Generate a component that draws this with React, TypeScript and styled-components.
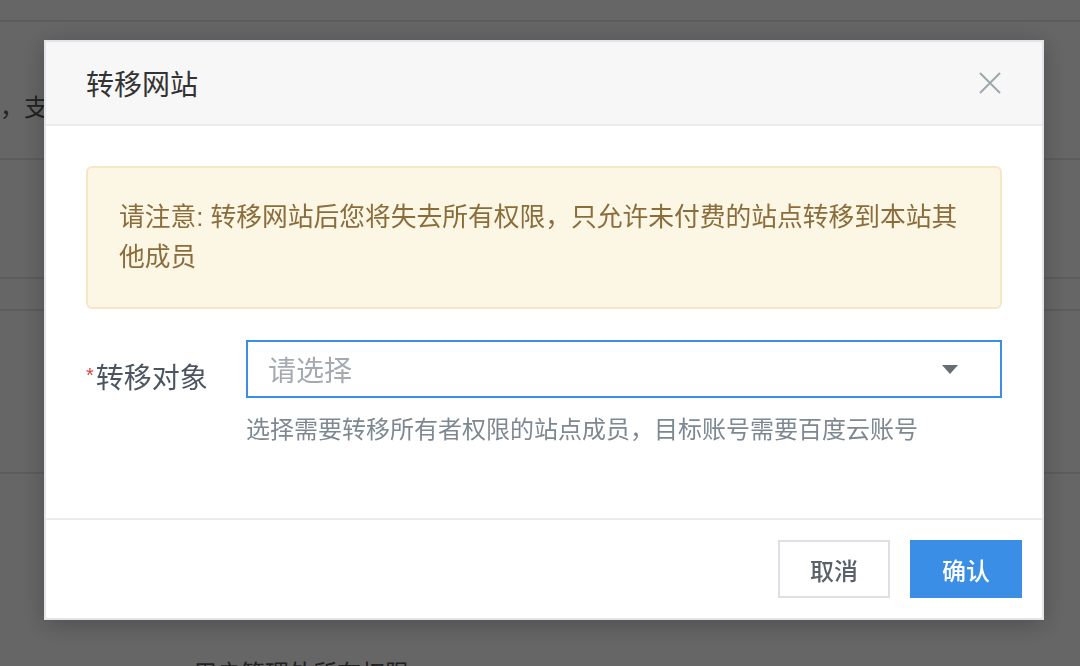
import React from 'react'
import styled, { createGlobalStyle } from 'styled-components'

const GlobalStyle = createGlobalStyle`
  html, body {
    margin: 0;
    padding: 0;
    background: #ffffff;
    font-family: "Liberation Sans", "Noto Sans CJK SC", sans-serif;
    overflow: hidden;
  }
  * {
    box-sizing: border-box;
  }
`

const Page = styled.div`
  width: 1080px;
  height: 666px;
  overflow: hidden;
  background: #ffffff;
  color: #444;
`

const Section = styled.div<{ $height: number; $padTop?: number }>`
  height: ${p => p.$height}px;
  padding-top: ${p => p.$padTop || 0}px;
  border-bottom: 2px solid #e6e6e6;
`

const PageText = styled.div<{ $indent?: number }>`
  padding-left: ${p => p.$indent || 0}px;
  font-size: 24px;
  line-height: 36px;
  color: #555;
  white-space: nowrap;
`

const BottomBlock = styled.div`
  padding-top: 182px;
`

const Mask = styled.div`
  position: fixed;
  inset: 0;
  background: rgba(0, 0, 0, 0.6);
  display: flex;
  align-items: flex-start;
  padding: 40px 0 0 44px;
`

const Dialog = styled.div`
  width: 1000px;
  height: 580px;
  background: #fff;
  border: 2px solid #e1e4e8;
  box-shadow: 0 4px 24px rgba(0, 0, 0, 0.25);
  display: flex;
  flex-direction: column;
`

const Header = styled.div`
  height: 84px;
  flex: none;
  background: #f7f7f7;
  border-bottom: 2px solid #ebebeb;
  display: flex;
  align-items: center;
  justify-content: space-between;
  padding: 0 41px 0 40px;
`

const Title = styled.div`
  font-size: 28px;
  color: #333;
`

const CloseButton = styled.button`
  width: 22px;
  height: 22px;
  padding: 0;
  border: 0;
  background: none;
  display: flex;
  cursor: pointer;
`

const Body = styled.div`
  flex: 1;
  padding: 40px 40px 40px 40px;
`

const Notice = styled.div`
  background: #fcf6e5;
  border: 2px solid #f6e7c6;
  border-radius: 6px;
  padding: 29px 30px 30px 31px;
  font-size: 25.75px;
  line-height: 40px;
  color: #8a6d3b;
`

const FormItem = styled.div`
  display: flex;
  margin-top: 31px;
  margin-bottom: 30px;
`

const Label = styled.div`
  width: 160px;
  flex: none;
  padding: 6px 41px 0 0;
  text-align: right;
  font-size: 28px;
  line-height: 58px;
  color: #4b5560;
  white-space: nowrap;
`

const Required = styled.span`
  color: #e2403f;
  font-size: 20px;
  vertical-align: 6px;
  margin-right: 2px;
`

const Control = styled.div`
  flex: 1;
`

const Select = styled.div<{ $focused?: boolean }>`
  height: 58px;
  border: 2px solid ${p => (p.$focused ? '#3b8ee3' : '#dde1e6')};
  display: flex;
  align-items: center;
  justify-content: space-between;
  padding: 0 42px 0 20px;
  background: #fff;
`

const Placeholder = styled.span`
  font-size: 28px;
  color: #a3aab1;
`

const Help = styled.div`
  margin-top: 14px;
  font-size: 24px;
  line-height: 36px;
  color: #7d8891;
`

const Footer = styled.div`
  flex: none;
  border-top: 2px solid #ebebeb;
  padding: 20px 20px 20px 20px;
  display: flex;
  justify-content: flex-end;
  gap: 20px;
`

const Button = styled.button<{ $primary?: boolean }>`
  width: 112px;
  height: 58px;
  font-family: inherit;
  font-size: 24px;
  font-weight: 500;
  border: 2px solid ${p => (p.$primary ? '#3a8ee6' : '#dde1e6')};
  background: ${p => (p.$primary ? '#3a8ee6' : '#fff')};
  color: ${p => (p.$primary ? '#fff' : '#5a6169')};
  cursor: pointer;
`

const CloseIcon = () => (
  <svg width="22" height="22" viewBox="0 0 22 22">
    <path d="M1 1 L21 21 M21 1 L1 21" stroke="#9ea8ae" strokeWidth="2" fill="none" />
  </svg>
)

const Caret = () => (
  <svg width="16" height="9" viewBox="0 0 16 9">
    <path d="M0 0 L16 0 L8 9 Z" fill="#666d75" />
  </svg>
)

const App: React.FC = () => {
  return (
    <>
      <GlobalStyle />
      <Page>
        <Section $height={22} />
        <Section $height={138} $padTop={68}>
          <PageText>，支持将网站转移给其他成员</PageText>
        </Section>
        <Section $height={119} />
        <Section $height={32} />
        <Section $height={163} />
        <BottomBlock>
          <PageText $indent={193}>用户管理外所有权限</PageText>
        </BottomBlock>
      </Page>
      <Mask>
        <Dialog>
          <Header>
            <Title>转移网站</Title>
            <CloseButton aria-label="关闭">
              <CloseIcon />
            </CloseButton>
          </Header>
          <Body>
            <Notice>
              请注意: 转移网站后您将失去所有权限，只允许未付费的站点转移到本站其他成员
            </Notice>
            <FormItem>
              <Label>
                <Required>*</Required>转移对象
              </Label>
              <Control>
                <Select $focused>
                  <Placeholder>请选择</Placeholder>
                  <Caret />
                </Select>
                <Help>选择需要转移所有者权限的站点成员，目标账号需要百度云账号</Help>
              </Control>
            </FormItem>
          </Body>
          <Footer>
            <Button>取消</Button>
            <Button $primary>确认</Button>
          </Footer>
        </Dialog>
      </Mask>
    </>
  )
}

export default App
